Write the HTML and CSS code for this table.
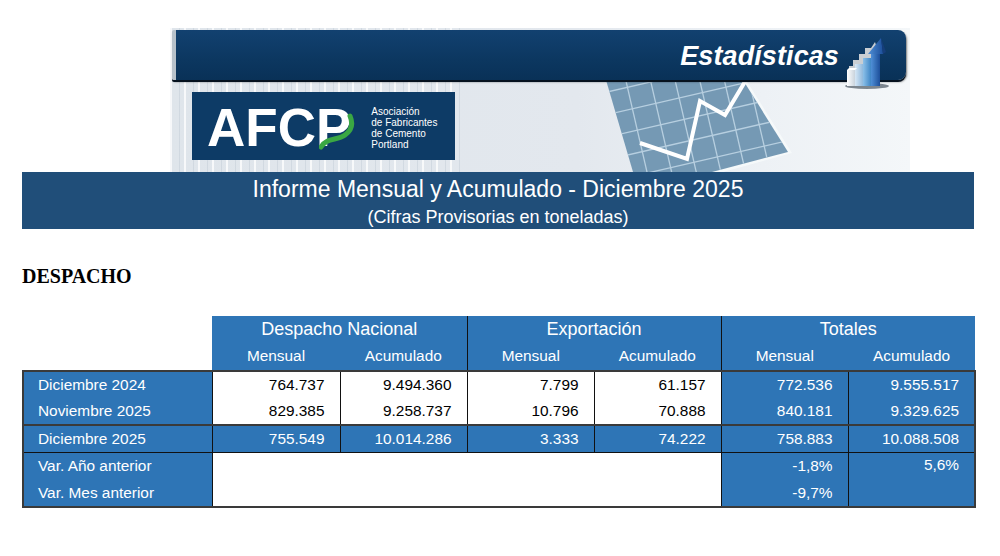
FILE: index.html
```html
<!DOCTYPE html>
<html lang="es">
<head>
<meta charset="utf-8">
<title>Estadísticas - AFCP</title>
<link rel="stylesheet" href="styles.css">
</head>
<body>
<div class="page">
  <div class="banner">
    <div class="topbar">
      <span class="estad">Estadísticas</span>
      <svg class="staticon" width="48" height="54" viewBox="0 0 48 54">
        <defs>
          <linearGradient id="b1" x1="0" x2="1"><stop offset="0" stop-color="#ffffff"/><stop offset="1" stop-color="#c9d3dc"/></linearGradient>
          <linearGradient id="b2" x1="0" x2="1"><stop offset="0" stop-color="#d6e7f5"/><stop offset="1" stop-color="#8fb8dc"/></linearGradient>
          <linearGradient id="b3" x1="0" x2="1"><stop offset="0" stop-color="#8cc0e8"/><stop offset="1" stop-color="#3f86c6"/></linearGradient>
          <linearGradient id="b4" x1="0" x2="1"><stop offset="0" stop-color="#4f8fd6"/><stop offset="1" stop-color="#1d4f9a"/></linearGradient>
        </defs>
        <ellipse cx="24" cy="50" rx="22" ry="3" fill="#1b2a38" opacity="0.55"/>
        <polygon points="6,30 10,30 10,24 16,24 16,18 22,18 22,12 28,12 32,6 34,12 30,20 26,26 18,30 12,34 6,36" fill="#c9ced3"/>
        <rect x="4" y="34" width="8" height="16" fill="url(#b1)"/>
        <rect x="12" y="28" width="8" height="22" fill="url(#b2)"/>
        <rect x="20" y="22" width="8" height="28" fill="url(#b3)"/>
        <rect x="28" y="16" width="9" height="34" fill="url(#b4)"/>
        <polygon points="25,18 40,18 38,2" fill="url(#b4)"/>
        <polygon points="38,2 40,18 43,16" fill="#163e7a"/>
        <polygon points="4,34 6,32 14,32 12,34" fill="#ffffff"/>
      </svg>
    </div>
    <div class="banner-body">
      <div class="logo">
        <span class="afcp">AFCP<svg class="swoosh" width="36" height="40" viewBox="0 0 36 40"><path d="M2 36 C 8 26, 18 30, 26 24 C 33 19, 34 12, 31 5" fill="none" stroke="#3aa743" stroke-width="5" stroke-linecap="round"/></svg></span>
        <span class="logo-text">Asociación<br>de Fabricantes<br>de Cemento<br>Portland</span>
      </div>
      <svg class="chartart" width="200" height="92" viewBox="0 0 200 92">
        <defs>
          <clipPath id="panel"><polygon points="6,0 143,0 188,72 112,92 33,92"/></clipPath>
        </defs>
        <polygon points="8,0 146,0 192,73 116,94 35,94" fill="#f6f9fb" opacity="0.9"/>
        <polygon points="6,0 143,0 188,72 112,92 33,92" fill="#7599b4"/>
        <g clip-path="url(#panel)">
          <g transform="rotate(-13 100 46)" stroke="#b7cfe0" stroke-width="1.3">
            <line x1="-40" y1="-8" x2="260" y2="-8"/>
            <line x1="-40" y1="14" x2="260" y2="14"/>
            <line x1="-40" y1="36" x2="260" y2="36"/>
            <line x1="-40" y1="58" x2="260" y2="58"/>
            <line x1="-40" y1="80" x2="260" y2="80"/>
            <line x1="-40" y1="102" x2="260" y2="102"/>
            <line x1="-10" y1="-60" x2="-10" y2="160"/>
            <line x1="14" y1="-60" x2="14" y2="160"/>
            <line x1="38" y1="-60" x2="38" y2="160"/>
            <line x1="62" y1="-60" x2="62" y2="160"/>
            <line x1="86" y1="-60" x2="86" y2="160"/>
            <line x1="110" y1="-60" x2="110" y2="160"/>
            <line x1="134" y1="-60" x2="134" y2="160"/>
            <line x1="158" y1="-60" x2="158" y2="160"/>
            <line x1="182" y1="-60" x2="182" y2="160"/>
          </g>
        </g>
        <polyline points="40,63 87,79 100,21 125,35 146,0" fill="none" stroke="#ffffff" stroke-width="4" stroke-linejoin="miter"/>
      </svg>
    </div>
  </div>

  <div class="title-bar">
    <div class="title">Informe Mensual y Acumulado - Diciembre 2025</div>
    <div class="subtitle">(Cifras Provisorias en toneladas)</div>
  </div>

  <h2 class="section">DESPACHO</h2>

  <table class="desp">
    <colgroup>
      <col class="c-lbl"><col class="c-n1"><col class="c-n"><col class="c-n"><col class="c-n"><col class="c-n"><col class="c-n">
    </colgroup>
    <thead>
      <tr class="h1">
        <th class="blank" rowspan="2"></th>
        <th colspan="2">Despacho Nacional</th>
        <th colspan="2" class="gs">Exportación</th>
        <th colspan="2" class="gs">Totales</th>
      </tr>
      <tr class="h2">
        <th>Mensual</th><th>Acumulado</th>
        <th class="gs">Mensual</th><th>Acumulado</th>
        <th class="gs">Mensual</th><th>Acumulado</th>
      </tr>
    </thead>
    <tbody>
      <tr class="r1">
        <td class="lbl">Diciembre 2024</td>
        <td class="w">764.737</td><td class="w">9.494.360</td>
        <td class="w">7.799</td><td class="w">61.157</td>
        <td class="b">772.536</td><td class="b last">9.555.517</td>
      </tr>
      <tr class="r2">
        <td class="lbl">Noviembre 2025</td>
        <td class="w">829.385</td><td class="w">9.258.737</td>
        <td class="w">10.796</td><td class="w">70.888</td>
        <td class="b">840.181</td><td class="b last">9.329.625</td>
      </tr>
      <tr class="r3">
        <td class="lbl">Diciembre 2025</td>
        <td class="b">755.549</td><td class="b">10.014.286</td>
        <td class="b">3.333</td><td class="b">74.222</td>
        <td class="b">758.883</td><td class="b last">10.088.508</td>
      </tr>
      <tr class="r4">
        <td class="lbl">Var. Año anterior</td>
        <td class="empty" colspan="4" rowspan="2"></td>
        <td class="b">-1,8%</td>
        <td class="b last top" rowspan="2">5,6%</td>
      </tr>
      <tr class="r5">
        <td class="lbl">Var. Mes anterior</td>
        <td class="b">-9,7%</td>
      </tr>
    </tbody>
  </table>
</div>
</body>
</html>
```

FILE: styles.css
```css
html, body {
  margin: 0;
  padding: 0;
  background: #ffffff;
}

body {
  font-family: "Liberation Sans", Arial, sans-serif;
  color: #000;
}

.page {
  width: 952px;
  padding: 28px 0 0 22px;
}

/* ---------- Banner ---------- */
.banner {
  width: 740px;
  height: 144px;
  margin-left: 148px;
  padding-top: 2px;
  box-sizing: border-box;
  background:
    repeating-linear-gradient(to right, rgba(255,255,255,0.75) 0 2px, rgba(255,255,255,0) 2px 9px, rgba(180,192,204,0.35) 9px 10px, rgba(255,255,255,0) 10px 14px),
    linear-gradient(to right, #dfe5eb 0%, #e3e8ee 55%, #edf1f5 80%, #f4f7f9 100%);
  background-size: 290px 100%, 100% 100%;
  background-repeat: no-repeat, no-repeat;
  background-position: 0 0, 0 0;
  background-color: #e6ebf0;
}

.topbar {
  position: relative;
  z-index: 2;
  margin-left: 2px;
  width: 734px;
  height: 50px;
  box-sizing: border-box;
  background: linear-gradient(#124170, #0c3760 60%, #093157);
  border-left: 4px solid #b7c1ca;
  border-radius: 2px 8px 8px 2px;
  box-shadow: 0 2px 0 #06121f, 1px 2px 2px rgba(0,0,0,0.5);
  display: flex;
  justify-content: flex-end;
  align-items: center;
  padding-right: 15px;
}

.estad {
  font-family: "Liberation Sans", Arial, sans-serif;
  font-weight: bold;
  font-style: italic;
  font-size: 27px;
  color: #ffffff;
  margin-top: 2px;
  letter-spacing: 0.1px;
}

.staticon {
  align-self: flex-start;
  margin-top: 6px;
  margin-left: 4px;
}

.banner-body {
  display: flex;
  height: 92px;
}

.logo {
  position: relative;
  margin: 12px 0 0 22px;
  width: 263px;
  height: 68px;
  background: #0d3b66;
  display: flex;
  align-items: center;
  box-sizing: border-box;
  padding-left: 15px;
}

.afcp {
  position: relative;
  font-family: "Liberation Sans", Arial, sans-serif;
  font-weight: bold;
  font-size: 53px;
  line-height: 1;
  color: #ffffff;
  letter-spacing: 0px;
  margin-top: 2px;
}

.swoosh {
  position: absolute;
  right: -4px;
  top: 10px;
}

.logo-text {
  margin-left: 20px;
  font-size: 10px;
  line-height: 11px;
  color: #ffffff;
  margin-top: 4px;
}

.chartart {
  margin-left: 145px;
  display: block;
}

/* ---------- Title bar ---------- */
.title-bar {
  height: 57px;
  background: #204e79;
  color: #ffffff;
  text-align: center;
  box-sizing: border-box;
  padding-top: 3px;
}

.title {
  font-size: 23px;
  line-height: 28px;
}

.subtitle {
  font-size: 18px;
  line-height: 22px;
  margin-top: 3px;
}

.section {
  font-family: "Liberation Serif", "Times New Roman", serif;
  font-weight: bold;
  font-size: 20px;
  line-height: 24px;
  margin: 35px 0 28px 0;
}

/* ---------- Table ---------- */
.desp {
  width: 952px;
  border-collapse: collapse;
  table-layout: fixed;
  font-size: 15.4px;
}

.c-lbl { width: 189px; }
.c-n1 { width: 128px; }
.c-n { width: 127px; }

.desp th {
  background: #2e75b6;
  color: #ffffff;
  font-weight: normal;
  text-align: center;
  padding: 0;
}

.desp th.blank {
  background: #ffffff;
}

.desp th.gs {
  border-left: 1px solid #111;
}

.desp tr.h1 th {
  height: 26px;
  font-size: 18px;
}

.desp tr.h2 th {
  height: 28px;
  font-size: 15.4px;
}

.desp td {
  padding: 0 15px 0 0;
  text-align: right;
  border-left: 1px solid #111;
  height: 26px;
  white-space: nowrap;
}

.desp td.lbl {
  background: #2e75b6;
  color: #ffffff;
  text-align: left;
  padding: 0 0 0 14px;
  border-left: 2px solid #3a3a3a;
}

.desp td.w {
  background: #ffffff;
  color: #000;
}

.desp td.b {
  background: #2e75b6;
  color: #ffffff;
}

.desp td.last {
  border-right: 2px solid #3a3a3a;
}

.desp td.top {
  vertical-align: top;
  padding-top: 3px;
  border-bottom: 2px solid #3a3a3a;
}

.desp td.empty {
  background: #ffffff;
  border-bottom: 2px solid #3a3a3a;
}

.desp tr.r1 td {
  border-top: 2px solid #3a3a3a;
}

.desp tr.r3 td {
  border-top: 2px solid #3a3a3a;
  border-bottom: 1px solid #111;
}

.desp tr.r5 td {
  border-bottom: 2px solid #3a3a3a;
  height: 27px;
}
```
